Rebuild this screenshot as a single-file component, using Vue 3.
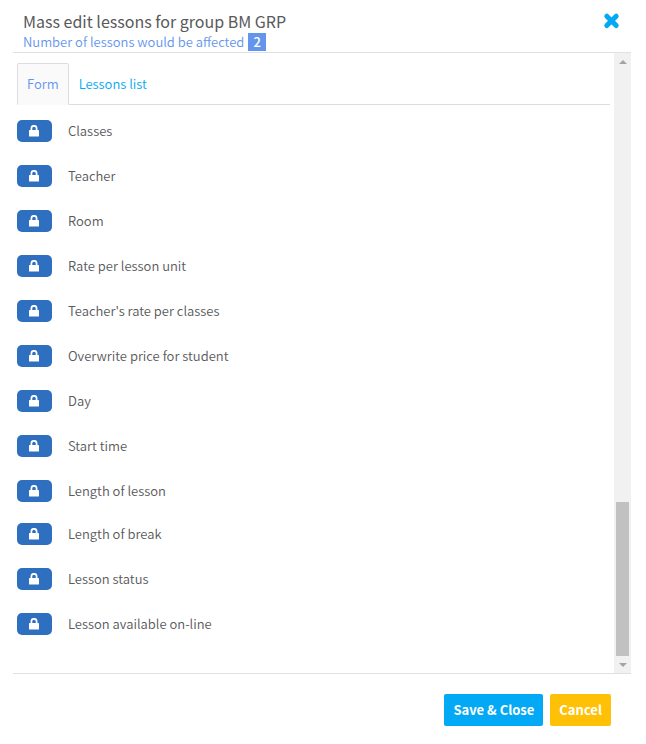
<script setup>
import { ref } from 'vue'

const tabs = ['Form', 'Lessons list']
const activeTab = ref('Form')

const fieldGroups = [
  [
    'Classes',
    'Teacher',
    'Room',
    'Rate per lesson unit',
    "Teacher's rate per classes",
    'Overwrite price for student',
    'Day',
    'Start time',
    'Length of lesson',
  ],
  ['Length of break', 'Lesson status', 'Lesson available on-line'],
]

const fieldId = (name) => 'field-' + name.toLowerCase().replace(/[^a-z]+/g, '-')
</script>

<template>
  <section class="dialog" role="dialog" aria-labelledby="dialog-title">
    <header class="header">
      <div class="heading">
        <h1 id="dialog-title" class="title">Mass edit lessons for group BM GRP</h1>
        <p class="subtitle">
          <span>Number of lessons would be affected</span>
          <span class="count">2</span>
        </p>
      </div>
      <button class="close" type="button" aria-label="Close">
        <svg viewBox="0 0 18 18" width="18" height="18" aria-hidden="true">
          <path d="M3.8 4.2L13.2 13.6M13.2 4.2L3.8 13.6" fill="none" stroke="currentColor" stroke-width="5" stroke-linecap="round" />
        </svg>
      </button>
    </header>

    <div class="body">
      <div class="content">
        <nav class="tabs" role="tablist">
          <button
            v-for="tab in tabs"
            :key="tab"
            class="tab"
            :class="{ active: tab === activeTab }"
            type="button"
            role="tab"
            :aria-selected="tab === activeTab"
            @click="activeTab = tab"
          >{{ tab }}</button>
        </nav>

        <div class="groups">
          <ul v-for="(group, index) in fieldGroups" :key="index" class="fields">
            <li v-for="field in group" :key="field" class="field">
              <button :id="fieldId(field)" class="lock" type="button">
                <svg viewBox="0 0 11 12" width="11" height="12" aria-hidden="true">
                  <path d="M2.4 6V3.4a2.6 2.6 0 0 1 5.2 0V6" fill="none" stroke="currentColor" stroke-width="1.7" />
                  <rect x="0" y="5" width="10" height="6.6" rx="0.6" fill="currentColor" />
                </svg>
              </button>
              <label :for="fieldId(field)">{{ field }}</label>
            </li>
          </ul>
        </div>
      </div>

      <div class="scrollbar" aria-hidden="true">
        <span class="arrow">
          <svg viewBox="0 0 8 4" width="8" height="4"><path d="M4 0L8 4H0Z" fill="currentColor" /></svg>
        </span>
        <span class="thumb"></span>
        <span class="arrow">
          <svg viewBox="0 0 8 4" width="8" height="4"><path d="M0 0H8L4 4Z" fill="currentColor" /></svg>
        </span>
      </div>
    </div>

    <footer class="footer">
      <button class="action save" type="button">Save &amp; Close</button>
      <button class="action cancel" type="button">Cancel</button>
    </footer>
  </section>
</template>

<style>
body {
  margin: 0;
  background: #fff;
}
</style>

<style scoped>
.dialog {
  padding: 0 15px 18px 13px;
  color: #58595b;
  font-family: "Noto Sans CJK SC", "Open Sans", sans-serif;
  font-size: 13px;
  font-weight: 350;
  line-height: 20px;
}

button {
  margin: 0;
  padding: 0;
  border: 0;
  background: none;
  font: inherit;
  cursor: pointer;
}

.header {
  display: flex;
  justify-content: space-between;
  align-items: flex-start;
  padding: 10px 10px 1px;
  border-bottom: 1px solid #e0e0e0;
}

.title {
  margin: 0;
  font-size: 16px;
  font-weight: 400;
  line-height: 23px;
}

.subtitle {
  display: flex;
  align-items: center;
  gap: 4px;
  margin: 0;
  color: #6495ed;
  line-height: 18px;
}

.count {
  padding: 0 5px;
  background: #6495ed;
  color: #fff;
  font-weight: 500;
}

.close {
  display: flex;
  padding: 2px 0;
  color: #03a9f4;
}

.body {
  display: flex;
  border-bottom: 1px solid #e0e0e0;
}

.content {
  flex: 1;
  padding: 10px 4px 38px;
}

.tabs {
  display: flex;
  border-bottom: 1px solid #ddd;
}

.tab {
  height: 42px;
  margin-bottom: -1px;
  padding: 0 9px;
  border: 1px solid transparent;
  border-radius: 2px 2px 0 0;
  color: #03a9f4;
}

.tab.active {
  border-color: #ddd #ddd transparent;
  background: #fafafa;
  color: #6495ed;
}

.groups {
  display: flex;
  flex-direction: column;
  gap: 21px;
  padding-top: 15px;
}

.fields {
  display: flex;
  flex-direction: column;
  gap: 23px;
  margin: 0;
  padding: 0;
  list-style: none;
}

.field {
  display: flex;
  align-items: center;
  gap: 16px;
  height: 22px;
}

.lock {
  display: flex;
  align-items: center;
  justify-content: center;
  width: 35px;
  height: 22px;
  border-radius: 5px;
  background: #2f6fc0;
  color: #fff;
}

.scrollbar {
  display: flex;
  flex-direction: column;
  width: 17px;
  background: #f1f1f1;
}

.arrow {
  display: flex;
  align-items: center;
  justify-content: center;
  height: 17px;
  color: #a3a3a7;
}

.thumb {
  height: 154px;
  margin: auto 2px 0;
  background: #c1c1c1;
}

.footer {
  display: flex;
  justify-content: flex-end;
  gap: 7px;
  padding: 20px 20px 0;
}

.action {
  height: 32px;
  padding: 0 9px;
  border-radius: 2px;
  color: #fff;
  font-weight: 700;
}

.save {
  background: #03a9f4;
}

.cancel {
  background: #ffc107;
}
</style>
